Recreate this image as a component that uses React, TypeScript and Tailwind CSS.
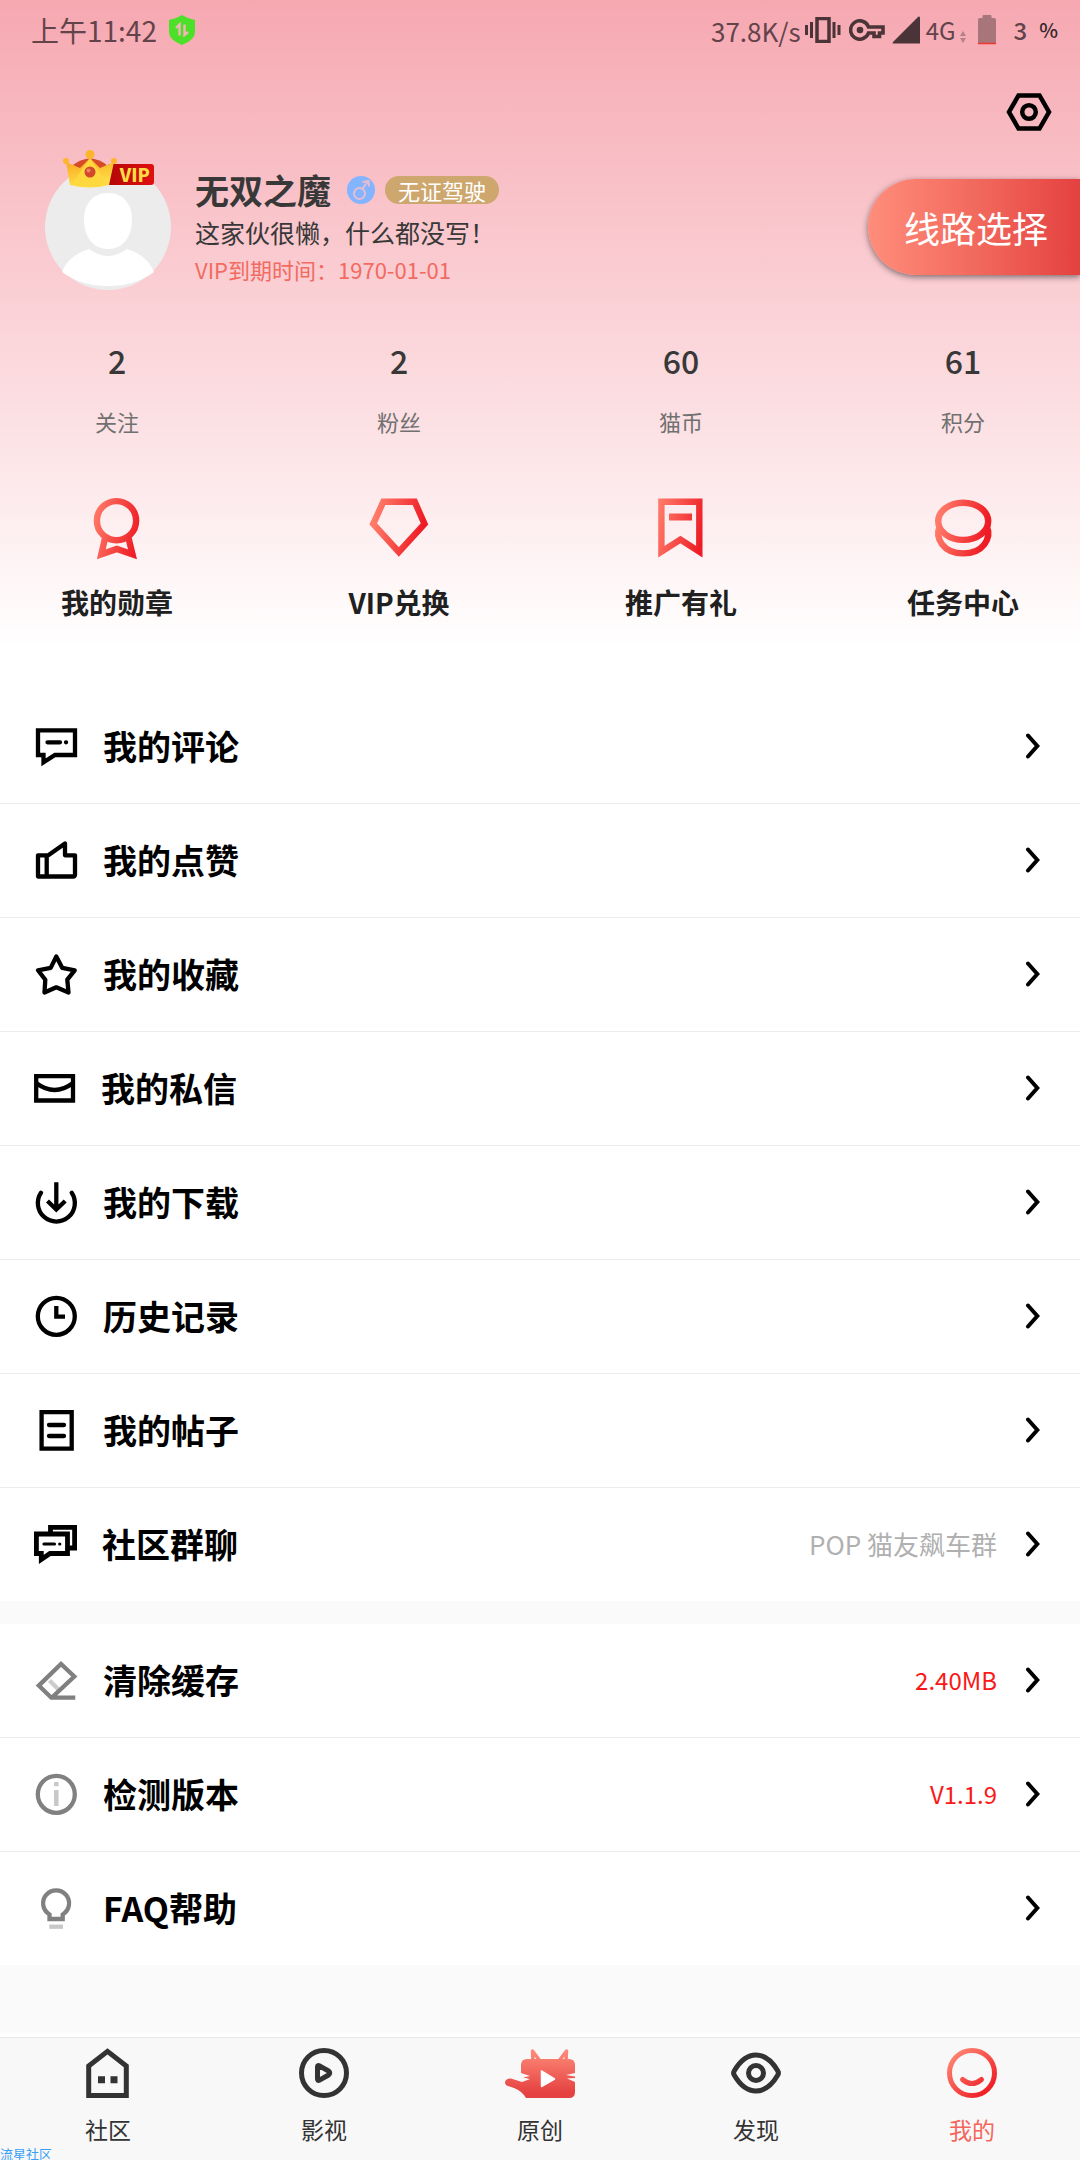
import type { ReactNode } from "react";

const rowClass = "flex h-[113px] w-full items-center pb-0.5 pl-[34px] pr-10 text-left";

function Line({ children, color = "#000", width = "w-11", box = "0 0 44 44" }: {
  children: ReactNode;
  color?: string;
  width?: string;
  box?: string;
}) {
  return (
    <svg viewBox={box} className={`${width} h-11 shrink-0`} fill="none" stroke={color} strokeWidth="4.3">
      {children}
    </svg>
  );
}

function RedIcon({ id, children }: { id: string; children: ReactNode }) {
  return (
    <svg viewBox="0 0 64 64" className="h-16 w-16" fill="none" stroke={`url(#${id})`} strokeWidth="6.4">
      <defs>
        <linearGradient id={id} gradientUnits="userSpaceOnUse" x1="8" y1="20" x2="56" y2="30">
          <stop stopColor="#ff7a69" />
          <stop offset="1" stopColor="#ee1c25" />
        </linearGradient>
      </defs>
      {children}
    </svg>
  );
}

const stats = [
  { value: "2", label: "关注" },
  { value: "2", label: "粉丝" },
  { value: "60", label: "猫币" },
  { value: "61", label: "积分" },
];

const shortcuts = [
  {
    label: "我的勋章",
    icon: (
      <RedIcon id="medal">
        <circle cx="31.5" cy="24.7" r="19.6" />
        <path d="M20.5 40L16.3 58.3L31.8 53L47.5 58.3L43 40" />
      </RedIcon>
    ),
  },
  {
    label: "VIP兑换",
    icon: (
      <RedIcon id="gem">
        <path d="M16.3 5.7H47.7L57.5 28L31.8 56L6.2 28Z" />
      </RedIcon>
    ),
  },
  {
    label: "推广有礼",
    icon: (
      <RedIcon id="ribbon">
        <path d="M12.4 5.7H50.3V55.6L31.4 43.6L12.4 55.6Z" />
        <path d="M20 21H43" strokeWidth="7" />
      </RedIcon>
    ),
  },
  {
    label: "任务中心",
    icon: (
      <RedIcon id="coins">
        <ellipse cx="32.2" cy="25.3" rx="25" ry="18.6" />
        <path d="M8.5 31C4 42 12 57.4 32.2 57.4S60.5 42 56 31" />
      </RedIcon>
    ),
  },
];

type Item = { label: string; icon: ReactNode; note?: string; noteClass?: string };

const mainItems: Item[] = [
  {
    label: "我的评论",
    icon: (
      <Line>
        <path d="M4 6.3H41V31H21L9.5 38.3V31H4Z" />
        <path d="M13.5 18.3H26M32 18.3H32.1" strokeLinecap="round" />
      </Line>
    ),
  },
  {
    label: "我的点赞",
    icon: (
      <Line>
        <path d="M4 17.3H14.3L31 5.5V17.3H41V36.5Q41 38.5 39 38.5H4ZM12.7 17.3V38.5" strokeLinejoin="round" />
      </Line>
    ),
  },
  {
    label: "我的收藏",
    icon: (
      <Line>
        <path
          d="M22.3 4.5L28.3 15.9L40.7 18.3L33.3 27.7L34.5 40.5L22.3 35.3L10.5 40.5L11.3 27.7L4 18.3L16.7 15.9Z"
          strokeLinejoin="round"
        />
      </Line>
    ),
  },
  {
    label: "我的私信",
    icon: (
      <Line width="w-[42px]" box="0 0 42 44">
        <path d="M2.2 10.2H39V34.5H2.2ZM2.2 17Q20.6 31 39 17" />
      </Line>
    ),
  },
  {
    label: "我的下载",
    icon: (
      <Line>
        <path d="M7 12.7A18.5 18.5 0 1 0 37.7 12.7" strokeLinecap="round" />
        <path d="M22.3 2.3V30M13.5 21L22.3 29.5L31.2 21" />
      </Line>
    ),
  },
  {
    label: "历史记录",
    icon: (
      <Line>
        <circle cx="22.3" cy="22.3" r="18.5" />
        <path d="M22.3 12V22.7H31" />
      </Line>
    ),
  },
  {
    label: "我的帖子",
    icon: (
      <Line>
        <path d="M7.6 4.1H37.7V40.7H7.6Z" />
        <path d="M15 17H30M15 28H30" strokeLinecap="round" />
      </Line>
    ),
  },
  {
    label: "社区群聊",
    icon: (
      <Line width="w-[43px]" box="0 0 43 44">
        <path d="M2.4 12H33.5V31.5H16L7.3 37.5V31.5H2.4ZM16.5 11V5.4H40.6V26H35" strokeWidth="4.8" />
        <path d="M10 22H20.5M25.7 22H25.8" strokeWidth="3.2" strokeLinecap="round" />
      </Line>
    ),
    note: "POP 猫友飙车群",
    noteClass: "text-[26px] text-[#b0b0b0]",
  },
];

const systemItems: Item[] = [
  {
    label: "清除缓存",
    icon: (
      <Line color="#808080">
        <path d="M15.5 22.5L26 33" stroke="#ccc" />
        <path d="M19 38.5L40.3 18.5L27 6L4.8 27.6L17.3 39.7H41.3" />
      </Line>
    ),
    note: "2.40MB",
    noteClass: "text-2xl text-[#fb1818]",
  },
  {
    label: "检测版本",
    icon: (
      <Line color="#808080">
        <circle cx="22.3" cy="22.3" r="18.5" />
        <path d="M22.3 10V14.3M22.3 18V34" stroke="#c8c8c8" strokeWidth="4.5" />
      </Line>
    ),
    note: "V1.1.9",
    noteClass: "text-2xl text-[#fb1818]",
  },
  {
    label: "FAQ帮助",
    icon: (
      <Line color="#808080">
        <path d="M15.5 33V28.5A13 13 0 1 1 28.7 28.5V33Z" />
        <path d="M15.3 40.7H29" stroke="#c8c8c8" />
      </Line>
    ),
  },
];

function MenuList({ items }: { items: Item[] }) {
  return (
    <ul className="divide-y divide-[#ececec] bg-white">
      {items.map((item) => (
        <li key={item.label}>
          <button type="button" className={rowClass}>
            {item.icon}
            <span className="ml-[25px] text-[34px] leading-10 font-bold text-black">{item.label}</span>
            <span className={`ml-auto mr-[29px] ${item.noteClass ?? ""}`}>{item.note}</span>
            <svg viewBox="0 0 14 26" className="h-[26px] w-3.5 shrink-0" fill="none" stroke="#000" strokeWidth="4">
              <path d="M2 2.5L11.3 13L2 23.5" strokeLinecap="round" />
            </svg>
          </button>
        </li>
      ))}
    </ul>
  );
}

function StatusBar() {
  return (
    <div className="flex h-[60px] items-center pl-[31px] pr-[22px] text-[#63434a]">
      <span className="text-[28px]">上午11:42</span>
      <svg viewBox="0 0 26 30" className="ml-3 h-[30px] w-[26px]">
        <path d="M13 0Q19 4 26 5V17Q26 25 13 30Q0 25 0 17V5Q7 4 13 0Z" fill="#4de028" />
        <path d="M7 13L10.5 9.5V20.500M19 17L15.500 20V9.500" fill="none" stroke="#f5b3ba" strokeWidth="2.4" />
      </svg>
      <span className="ml-auto text-[26px]">37.8K/s</span>
      <svg viewBox="0 0 36 26" className="ml-1 h-[26px] w-9" fill="none" stroke="#4b3438" strokeWidth="3">
        <path d="M12 1.5H24V24.5H12Z" strokeWidth="3.5" />
        <path d="M1.5 8V18M6.5 5V21M29 5V21M34 8V18" />
      </svg>
      <svg viewBox="0 0 36 22" className="ml-2 h-[22px] w-9" fill="none" stroke="#4b3438" strokeWidth="3.6">
        <path d="M19.5 8A9.2 9.2 0 1 0 19.5 14H25V17.5H30.5V14H34V8Z" />
        <circle cx="11" cy="11" r="3.3" fill="#4b3438" stroke="none" />
      </svg>
      <svg viewBox="0 0 28 28" className="ml-[7px] h-7 w-7">
        <path d="M26.5 0.5Q28 0 28 2V27.5H1Q0 27 1 26Z" fill="#4b3438" />
      </svg>
      <span className="ml-1.5 text-2xl">4G</span>
      <svg viewBox="0 0 6 12" className="mt-3.5 ml-1 h-3 w-1.5" fill="#b77f88">
        <path d="M3 0L6 5H0ZM3 12L0 7H6Z" />
      </svg>
      <svg viewBox="0 0 18 30" className="ml-3 h-[30px] w-[18px]">
        <path d="M0 5Q0 3 2 3H4.5V1Q4.5 0 5.5 0H12.5Q13.5 0 13.5 1V3H16Q18 3 18 5V29H0Z" fill="#a8757b" />
        <path d="M0 28.5H18" stroke="#f3352f" strokeWidth="1.5" />
      </svg>
      <span className="ml-[18px] text-2xl font-medium">3</span>
      <span className="ml-3 text-xl font-medium text-[#33262a]">%</span>
    </div>
  );
}

function Avatar() {
  return (
    <div className="relative h-[126px] w-[126px] shrink-0">
      <svg viewBox="0 0 126 126" className="h-full w-full">
        <circle cx="63" cy="63" r="63" fill="#ececec" />
        <path d="M63 29C78 29 87 40 87 55C87 73 78 85 63 85S39 73 39 55C39 40 48 29 63 29Z" fill="#fff" />
        <path d="M44 85Q63 99 82 85C95 89 104 96 109 108Q90 122 63 122T17 108C22 96 31 89 44 85Z" fill="#fff" />
      </svg>
      <span className="absolute top-0 left-[62px] flex h-[21px] w-[47px] items-center justify-end rounded-[3px] bg-gradient-to-r from-[#b30606] to-[#e01010] pr-1 text-[18px] leading-[21px] font-black text-[#ffdc45]">
        VIP
      </span>
      <svg viewBox="0 0 54 38" className="absolute -top-3.5 left-[18px] h-[38px] w-[54px]">
        <defs>
          <linearGradient id="crown" x1="0" y1="0" x2="0.3" y2="1">
            <stop stopColor="#f9a11c" />
            <stop offset="1" stopColor="#ffe04a" />
          </linearGradient>
        </defs>
        <path d="M10 15Q27 2 44 15L40 24H14Z" fill="#d64a28" />
        <path d="M3 12L17 18L27 8L37 18L51 12L46 35Q27 40 7 35Z" fill="url(#crown)" />
        <path d="M27 8L44 34Q27 40 9 34Z" fill="#ffd83f" />
        <circle cx="27" cy="4.5" r="4.5" fill="#fdb62c" />
        <circle cx="3" cy="11" r="3" fill="#fdb62c" />
        <circle cx="51" cy="11" r="3" fill="#fdb62c" />
        <circle cx="27" cy="22" r="5.5" fill="#d3472c" />
        <circle cx="25.5" cy="20.5" r="2" fill="#e98468" />
      </svg>
    </div>
  );
}

const navIcon = "h-[50px] w-[50px]";

const tabs = [
  {
    label: "社区",
    icon: (
      <svg viewBox="0 0 50 50" className={navIcon} fill="none" stroke="#333" strokeWidth="5">
        <path d="M5.7 18L24.5 3.3L43.3 18V47.5H5.7Z" />
        <path d="M15 31.7H22M27.5 31.7H34.5" strokeWidth="7" />
      </svg>
    ),
  },
  {
    label: "影视",
    icon: (
      <svg viewBox="0 0 50 50" className={navIcon} fill="none" stroke="#333" strokeWidth="5">
        <circle cx="25" cy="25" r="22.5" />
        <path d="M18.5 18.5Q18.5 17 20.5 17.8L29.5 23Q32 25 29.5 27L20.5 32.2Q18.5 33 18.5 31Z" strokeLinejoin="round" />
      </svg>
    ),
  },
  {
    label: "原创",
    icon: (
      <svg viewBox="0 0 70 50" className="h-[50px] w-[70px]">
        <defs>
          <linearGradient id="cat" gradientUnits="userSpaceOnUse" x1="0" y1="0" x2="0" y2="50">
            <stop stopColor="#ff8f7c" />
            <stop offset="0.9" stopColor="#e54140" />
          </linearGradient>
        </defs>
        <path d="M28 13L27.5 3L35 13M54 13L61.5 3L61 13" fill="none" stroke="url(#cat)" strokeWidth="3.5" strokeLinejoin="round" />
        <path
          d="M22 11H64Q70 11 70 17V25L61 27L70 28.5V30L62 30.5L70 34V44Q70 50 64 50H21Q17 43 9 40L3 38Q0 37 0 34Q1 30 6 30.5L17 34L25 31L18 29.5L25 28L16 25V17Q16 11 22 11Z"
          fill="url(#cat)"
        />
        <path d="M36.5 23L49.5 31L36.5 38.5Z" fill="#fff" stroke="#fff" strokeWidth="1.5" strokeLinejoin="round" />
      </svg>
    ),
  },
  {
    label: "发现",
    icon: (
      <svg viewBox="0 0 50 50" className={navIcon} fill="none" stroke="#333" strokeWidth="5">
        <path d="M3.2 27Q2 25 3.2 23C9 13 16 7 25 7S41 13 46.8 23Q48 25 46.8 27C41 37 34 43 25 43S9 37 3.2 27Z" />
        <circle cx="25" cy="25" r="7.5" />
      </svg>
    ),
  },
  {
    label: "我的",
    active: true,
    icon: (
      <svg viewBox="0 0 50 50" className={navIcon} fill="none" stroke="url(#smile)" strokeWidth="5">
        <defs>
          <linearGradient id="smile" gradientUnits="userSpaceOnUse" x1="6" y1="6" x2="42" y2="44">
            <stop stopColor="#ff8471" />
            <stop offset="1" stopColor="#ee1c25" />
          </linearGradient>
        </defs>
        <circle cx="25" cy="25" r="22.5" />
        <path d="M15.5 31.5Q25 39.5 34.5 31.5" strokeLinecap="round" />
      </svg>
    ),
  },
];

export default function App() {
  return (
    <div className="relative flex min-h-screen flex-col bg-white font-['Noto_Sans_CJK_SC',sans-serif]">
      <header className="bg-linear-to-b/srgb from-[#f6a8b1] to-white to-94% pb-[68px]">
        <StatusBar />
        <div className="flex h-[104px] items-center justify-end pr-7">
          <button type="button" aria-label="设置">
            <svg viewBox="0 0 46 38" className="h-[38px] w-[46px]" fill="none" stroke="#000" strokeWidth="4.5">
              <path d="M12.5 2.5H33.5L43 19L33.5 35.5H12.5L3 19Z" />
              <circle cx="23" cy="19" r="6.8" />
            </svg>
          </button>
        </div>

        <div className="flex items-center pl-[45px]">
          <Avatar />
          <div className="ml-6">
            <div className="flex h-11 items-center">
              <h1 className="text-[34px] leading-[44px] font-bold text-[#383838]">无双之魔</h1>
              <svg viewBox="0 0 28 28" className="ml-4 h-7 w-7" fill="none" stroke="#e8bcd0" strokeWidth="2">
                <circle cx="14" cy="14" r="14" fill="#82b4ff" stroke="none" />
                <circle cx="12.5" cy="17.5" r="5.5" />
                <path d="M15.5 12.5L21 5.5M15.5 6L21.5 5L22 10.5" />
              </svg>
              <span className="ml-2.5 h-7 rounded-full bg-[#cda76e] px-[13px] text-[22px] leading-7 text-white">无证驾驶</span>
            </div>
            <p className="text-[25px] leading-10 text-[#383838]">这家伙很懒，什么都没写！</p>
            <p className="text-[22px] leading-[34px] text-[#f26a60]">VIP到期时间：1970-01-01</p>
          </div>
          <button
            type="button"
            className="ml-auto h-24 rounded-l-full bg-gradient-to-r from-[#ff8d7b] to-[#e44040] pr-8 pl-9 text-4xl text-white shadow-[0_2px_6px_rgba(0,0,0,0.5)]"
          >
            线路选择
          </button>
        </div>

        <dl className="mt-[50px] flex justify-between px-[60px]">
          {stats.map((stat) => (
            <div key={stat.label} className="flex w-[114px] flex-col-reverse items-center gap-[26px]">
              <dt className="text-[22px] leading-[30px] text-[#707070]">{stat.label}</dt>
              <dd className="text-[32px] leading-10 font-medium text-[#383838]">{stat.value}</dd>
            </div>
          ))}
        </dl>

        <div className="mt-[60px] flex justify-between px-[60px]">
          {shortcuts.map((shortcut) => (
            <button
              key={shortcut.label}
              type="button"
              className="flex w-[114px] flex-col items-center gap-[22px] text-[28px] leading-10 font-bold whitespace-nowrap text-[#202020]"
            >
              {shortcut.icon}
              {shortcut.label}
            </button>
          ))}
        </div>
      </header>

      <main className="flex grow flex-col gap-[23px] bg-[#fafafa] pb-[68px]">
        <MenuList items={mainItems} />
        <MenuList items={systemItems} />
      </main>

      <nav className="mt-1 grid grid-cols-5 border-t border-[#e8e8e8] bg-[#f8f8f8] pt-2.5 pb-3.5">
        {tabs.map((tab) => (
          <a
            key={tab.label}
            href="#"
            className={`flex flex-col items-center gap-3.5 text-[23px] leading-[34px] ${tab.active ? "text-[#f4665c]" : "text-[#333]"}`}
          >
            {tab.icon}
            {tab.label}
          </a>
        ))}
      </nav>
      <span className="absolute bottom-0 left-0 text-[13px] leading-[13px] text-[#3aa0f5]">流星社区</span>
    </div>
  );
}
